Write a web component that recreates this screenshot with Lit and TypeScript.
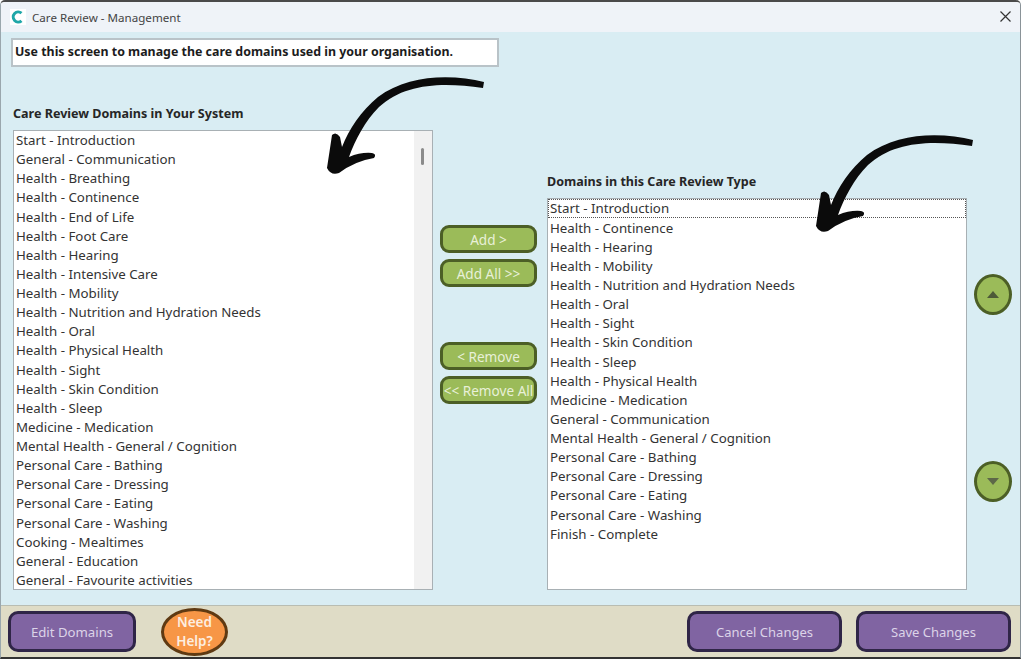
import { LitElement, html, css, svg } from "lit";
import { customElement } from "lit/decorators.js";

const LEFT = ["Start - Introduction","General - Communication","Health - Breathing","Health - Continence","Health - End of Life","Health - Foot Care","Health - Hearing","Health - Intensive Care","Health - Mobility","Health - Nutrition and Hydration Needs","Health - Oral","Health - Physical Health","Health - Sight","Health - Skin Condition","Health - Sleep","Medicine - Medication","Mental Health - General / Cognition","Personal Care - Bathing","Personal Care - Dressing","Personal Care - Eating","Personal Care - Washing","Cooking - Mealtimes","General - Education","General - Favourite activities"];
const RIGHT = ["Start - Introduction","Health - Continence","Health - Hearing","Health - Mobility","Health - Nutrition and Hydration Needs","Health - Oral","Health - Sight","Health - Skin Condition","Health - Sleep","Health - Physical Health","Medicine - Medication","General - Communication","Mental Health - General / Cognition","Personal Care - Bathing","Personal Care - Dressing","Personal Care - Eating","Personal Care - Washing","Finish - Complete"];

const arrow = svg`
  <path d="M1 -3 C-30 -11 -75 -11 -105 12 C-122 26 -134 44 -141 62 L-143 52 Q-147 46 -151 50 Q-154 70 -156 83 Q-152 91 -144 88 Q-128 76 -109 73 Q-106 69 -111 68 Q-122 67 -134 72 C-128 55 -118 36 -104 22 C-78 -2 -40 -3 0 3 Z" fill="#0b0b0b"/>`;

@customElement("app-root")
export class AppRoot extends LitElement {
  static styles = css`
    :host { display: block; width: 1024px; height: 662px; overflow: hidden; background: #fff; position: relative;
      font-family: "Noto Sans", "Open Sans", sans-serif; color: #2a2a2a; }
    .win { height: 659px; width: 1021px; box-sizing: border-box; border-top: 2px solid #4a4a4a; border-left: 1px solid #9aa7ad;
      border-right: 1px solid #8a9398; border-bottom: 2px solid #333; border-radius: 5px 5px 0 0; display: flex; flex-direction: column; overflow: hidden; }
    .title { height: 30px; flex: none; background: #eff3f8; display: flex; align-items: center; padding: 0 9px; gap: 6px; font-size: 11.6px; color: #444; }
    .logo { width: 16px; height: 16px; background: #fff; display: flex; }
    .title .name { flex: 1; }
    .close { width: 13px; height: 13px; margin-right: -1px; margin-bottom: 2px; }
    .body { flex: 1; background: #d9edf3; padding: 6px 0 0 10px; display: flex; flex-direction: column; min-height: 0; }
    .intro { width: 488px; height: 29px; box-sizing: border-box; border: 2px solid #b9c3c8; background: #fff; font-size: 12.4px; font-weight: 700;
      color: #1c1c1c; padding: 0 2px; line-height: 24px; flex: none; white-space: nowrap; }
    .main { flex: 1; display: flex; align-items: flex-end; padding-bottom: 15px; margin-left: 2px; }
    .col { width: 420px; display: flex; flex-direction: column; flex: none; }
    .head { font-size: 12.55px; font-weight: 700; color: #262626; height: 25px; line-height: 18px; white-space: nowrap; }
    .list { box-sizing: border-box; border: 1px solid #a8b0b4; background: #fff; overflow: hidden; font-size: 13.3px; color: #333; padding: 0 2px; position: relative; }
    .list.l { height: 460px; padding-right: 18px; }
    .list.r { height: 392px; }
    .row { height: 19.13px; line-height: 19px; white-space: nowrap; }
    .list.r .row + .row { position: relative; top: 0.5px; }
    .row.sel { outline: 1px dotted #555; outline-offset: -1px; margin: 0 -2px; padding-left: 2px; }
    .track { position: absolute; right: 0; top: 0; bottom: 0; width: 18px; background: #f1f1f1; }
    .thumb { position: absolute; right: 8px; top: 17px; width: 3px; height: 17px; background: #8b8b8b; border-radius: 2px; }
    .mid { width: 114px; flex: none; align-self: flex-start; display: flex; flex-direction: column; align-items: center; padding-top: 158px; box-sizing: border-box; }
    .btn { box-sizing: border-box; width: 97px; height: 28px; border: 3px solid #4c5f26; border-radius: 9px; background: #9bbb59; color: #e8f0d8; font-size: 13.6px;
      display: flex; align-items: center; justify-content: center; white-space: nowrap; margin-left: -3px; }
    .btn + .btn { margin-top: 6px; }
    .gap { height: 55px; flex: none; }
    .side { flex: 1; align-self: flex-start; position: relative; }
    .updown { display: flex; flex-direction: column; align-items: flex-start; padding: 207px 0 0 7px; gap: 146px; }
    .round { box-sizing: border-box; width: 38px; height: 41px; border-radius: 50%; border: 3px solid #4c5f26; background: #9bbb59; display: flex; align-items: center; justify-content: center; }
    .foot { flex: none; height: 52px; box-sizing: border-box; background: #dfdcc6; border-top: 1px solid #b9bdb2; display: flex; align-items: center; padding: 0 9px 0 7px; }
    .pb { box-sizing: border-box; height: 41px; border: 3px solid #2f2547; border-radius: 10px; background: #8064a2; color: #dcd3e8; font-size: 13px;
      display: flex; align-items: center; justify-content: center; }
    .pb.edit { width: 128px; font-size: 13.2px; }
    .pb.cancel { width: 155px; margin-left: auto; }
    .pb.save { width: 155px; margin-left: 14px; }
    .help { box-sizing: border-box; width: 67px; height: 48px; margin-left: 25px; border-radius: 50%; border: 3px solid #5f3a12; background: #f79646; color: #fdeee0;
      font-size: 13.5px; font-weight: 600; line-height: 19px; text-align: center; display: flex; align-items: center; justify-content: center; }
    .arrows { position: absolute; left: 0; top: 0; width: 1024px; height: 662px; pointer-events: none; }
  `;

  render() {
    return html`
      <div class="win">
        <div class="title">
          <span class="logo"><svg width="16" height="16" viewBox="0 0 16 16"><path d="M11.5 4.2 A5 5 0 1 0 11.5 11.8" fill="none" stroke="#1fa7a8" stroke-width="3"/></svg></span>
          <span class="name">Care Review - Management</span>
          <svg class="close" viewBox="0 0 13 13"><path d="M1.5 1.5 L11.5 11.5 M11.5 1.5 L1.5 11.5" stroke="#333" stroke-width="1.2"/></svg>
        </div>
        <div class="body">
          <div class="intro">Use this screen to manage the care domains used in your organisation.</div>
          <div class="main">
            <div class="col">
              <div class="head">Care Review Domains in Your System</div>
              <div class="list l">
                ${LEFT.map((t) => html`<div class="row">${t}</div>`)}
                <div class="track"></div><div class="thumb"></div>
              </div>
            </div>
            <div class="mid">
              <div class="btn">Add &gt;</div>
              <div class="btn">Add All &gt;&gt;</div>
              <div class="gap"></div>
              <div class="btn">&lt; Remove</div>
              <div class="btn">&lt;&lt; Remove All</div>
            </div>
            <div class="col">
              <div class="head">Domains in this Care Review Type</div>
              <div class="list r">
                ${RIGHT.map((t, i) => html`<div class="row ${i === 0 ? "sel" : ""}">${t}</div>`)}
              </div>
            </div>
            <div class="side">
              <div class="updown">
                <div class="round"><svg width="12" height="7" viewBox="0 0 12 7"><path d="M6 0 L12 7 H0 Z" fill="#4d5a38"/></svg></div>
                <div class="round"><svg width="12" height="7" viewBox="0 0 12 7"><path d="M0 0 H12 L6 7 Z" fill="#5d6848"/></svg></div>
              </div>
            </div>
          </div>
        </div>
        <div class="foot">
          <div class="pb edit">Edit Domains</div>
          <div class="help">Need<br />Help?</div>
          <div class="pb cancel">Cancel Changes</div>
          <div class="pb save">Save Changes</div>
        </div>
      </div>
      <svg class="arrows" viewBox="0 0 1024 662">
        <g transform="translate(483 85)">${arrow}</g>
        <g transform="translate(972 143)">${arrow}</g>
      </svg>
    `;
  }
}
